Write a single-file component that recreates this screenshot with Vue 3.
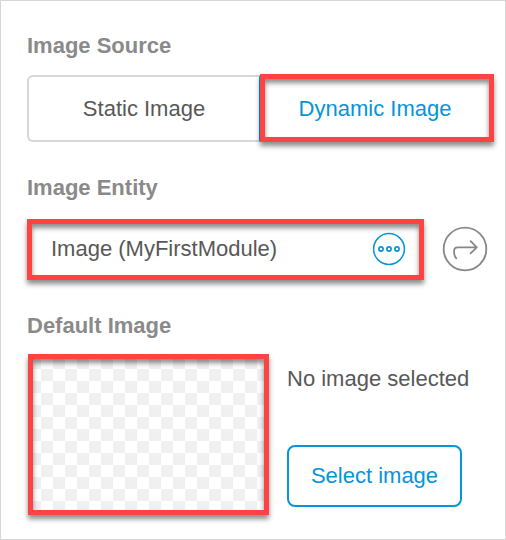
<script setup>
import { ref } from 'vue'

const sources = ['Static Image', 'Dynamic Image']
const source = ref('Dynamic Image')
const entity = ref('Image (MyFirstModule)')
</script>

<template>
  <main class="panel">
    <section class="field source">
      <h2>Image Source</h2>
      <div class="toggle">
        <button
          v-for="s in sources"
          :key="s"
          :class="['option', { active: s === source }]"
          @click="source = s"
        >
          {{ s }}
        </button>
      </div>
    </section>

    <section class="field entity">
      <h2>Image Entity</h2>
      <div class="entity-row">
        <div class="entity-box marked">
          <span>{{ entity }}</span>
          <svg width="34" height="34" viewBox="0 0 34 34" fill="none" stroke="#0595db">
            <circle cx="17" cy="17" r="15.4" stroke-width="1.5" />
            <circle cx="9" cy="17" r="2.1" stroke-width="1.7" />
            <circle cx="17" cy="17" r="2.1" stroke-width="1.7" />
            <circle cx="25" cy="17" r="2.1" stroke-width="1.7" />
          </svg>
        </div>
        <svg class="go" width="46" height="46" viewBox="0 0 46 46" fill="none" stroke="#888">
          <circle cx="23" cy="23" r="21.3" stroke-width="1.8" />
          <path
            d="M14.3 32.3C12.8 30.8 12.1 28.6 12.1 26V24.8Q12.1 21.3 15.8 21.3H34.6M28.6 15.2L34.8 21.3L28.6 27.4"
            stroke-width="1.8"
            stroke-linecap="round"
            stroke-linejoin="round"
          />
        </svg>
      </div>
    </section>

    <section class="field">
      <h2>Default Image</h2>
      <div class="default-row">
        <div class="preview marked"></div>
        <div class="picker">
          <p>No image selected</p>
          <button class="select">Select image</button>
        </div>
      </div>
    </section>
  </main>
</template>

<style>
body {
  background: #fff;
}
</style>

<style scoped>
.panel {
  box-sizing: border-box;
  width: 506px;
  height: 540px;
  padding: 32px 11px 0 26px;
  border: 1px solid #d7d7d7;
  background: #fff;
  color: #585858;
  font: 22px/26px "Liberation Sans", Arial, sans-serif;
}
h2 {
  margin: 0;
  color: #8a8a8a;
  font-size: 22px;
  font-weight: 700;
  line-height: 26px;
}
button {
  box-sizing: border-box;
  margin: 0;
  padding: 0;
  background: none;
  color: inherit;
  font: inherit;
}
.source {
  height: 142px;
}
.entity {
  height: 138px;
}
.toggle {
  display: flex;
  align-items: stretch;
  height: 68px;
  margin-top: 15px;
}
.option {
  width: 233px;
  height: 67px;
  margin-top: 1px;
  border: 2px solid #d7d7d7;
  border-right: 1px solid #0595db;
  border-radius: 6px 0 0 6px;
}
.option.active,
.marked {
  box-sizing: border-box;
  border: 5px solid #ff4343;
  border-radius: 0;
  box-shadow:
    0 4px 5px rgba(0, 0, 0, 0.45),
    inset 0 4px 5px rgba(0, 0, 0, 0.45);
}
.option.active {
  width: 234px;
  height: 68px;
  margin-top: 0;
  padding: 2px 4px 0 0;
  color: #0595db;
}
.entity-row {
  display: flex;
  align-items: center;
  margin-top: 18px;
}
.entity-box {
  display: flex;
  align-items: center;
  justify-content: space-between;
  width: 397px;
  height: 61px;
  padding: 0 13px 1px 19px;
}
.entity-box span {
  padding-bottom: 1px;
}
.go {
  margin: 0 0 1px 18px;
}
.default-row {
  display: flex;
  margin: 15px 0 0 1px;
}
.preview {
  width: 241px;
  height: 161px;
  background: repeating-conic-gradient(#f0f0f0 0 25%, #fff 0 50%) 20px 10px / 24px 24px;
}
.picker {
  margin-left: 18px;
}
.picker p {
  margin: 12px 0 53px;
}
.select {
  width: 175px;
  height: 62px;
  border: 2px solid #0595db;
  border-radius: 8px;
  color: #0595db;
}
</style>
